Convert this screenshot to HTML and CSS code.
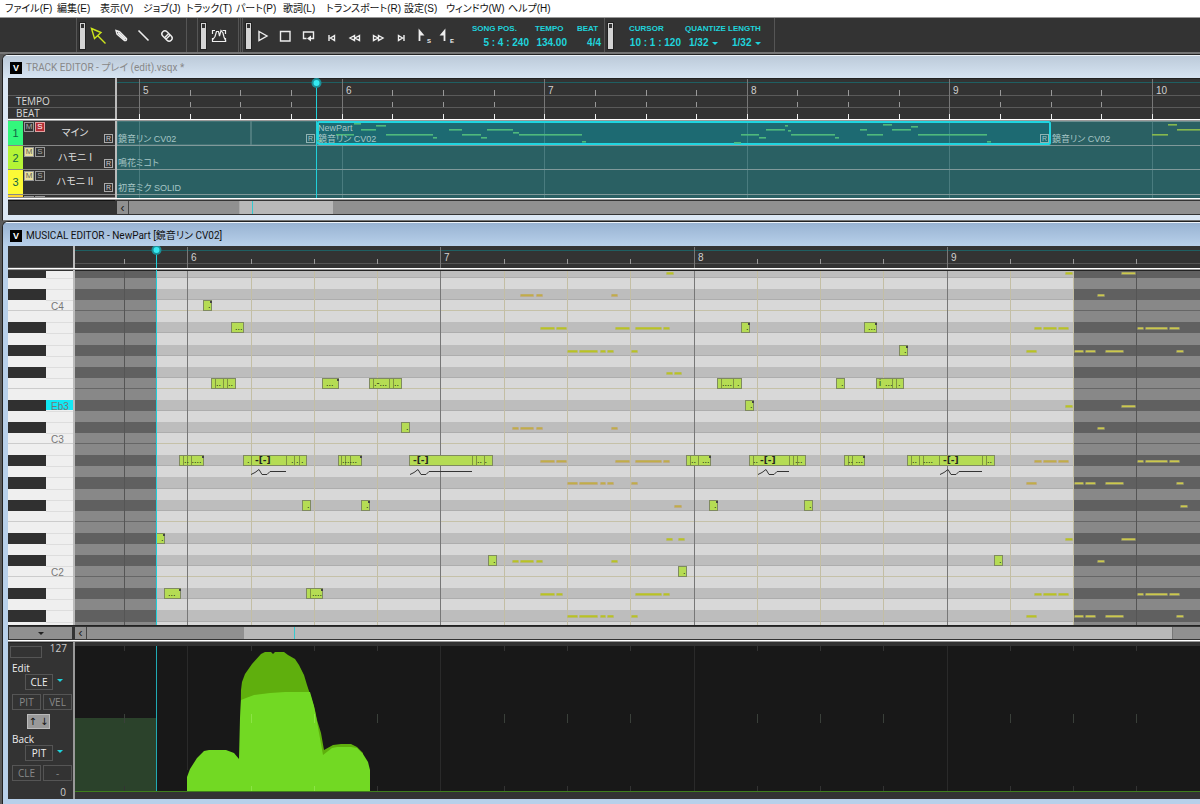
FILE: index.html
```html
<!DOCTYPE html>
<html lang="ja">
<head>
<meta charset="utf-8">
<title>Vocal Editor</title>
<link rel="stylesheet" href="styles.css">
</head>
<body>
<nav class="menubar">
  <button>ファイル(F)</button><button>編集(E)</button><button>表示(V)</button><button>ジョブ(J)</button><button>トラック(T)</button><button>パート(P)</button><button>歌詞(L)</button><button>トランスポート(R)</button><button>設定(S)</button><button>ウィンドウ(W)</button><button>ヘルプ(H)</button>
</nav>

<header class="toolbar">
  <div class="group tools">
    <i class="grip"></i>
    <button class="tool active" aria-label="Select"><svg viewBox="0 0 22 22"><path d="M4.500 3.500L14 7.500L7.500 13.500ZM10.500 10.500L18.500 18.500"/></svg></button>
    <button class="tool" aria-label="Pencil"><svg viewBox="0 0 22 22"><path d="M6 5.500L9.500 6.500L16.500 13.500Q17 16 14.500 15.500L7 9Z"/><path d="M8 7.500L15.500 14.500" stroke-width="2"/></svg></button>
    <button class="tool" aria-label="Line"><svg viewBox="0 0 22 22"><path d="M5.500 5.500L15.500 15.500" stroke-width="1.600"/></svg></button>
    <button class="tool" aria-label="Eraser"><svg viewBox="0 0 22 22"><g transform="rotate(45 11 11)"><rect x="5" y="8" width="12" height="6" rx="3"/><path d="M10.500 8v6M12.500 8v6"/></g></svg></button>
  </div>
  <div class="group control">
    <i class="grip"></i>
    <button class="tool" aria-label="Control curve"><svg viewBox="0 0 22 22"><path d="M7 5.500H4.500V9M4.500 13V16.500H17.500V13M14.500 5.500H17.500V9M4.500 15L7 11.500L8.500 6.500H10.500L11.500 11L13 5.500L15 8L16 12L18 16.500" stroke-width="1.200"/></svg></button>
  </div>
  <div class="group transport">
    <i class="grip"></i>
    <button class="tool" aria-label="Play"><svg viewBox="0 0 22 22"><path d="M7 6.500L15 11L7 15.500Z"/></svg></button>
    <button class="tool" aria-label="Stop"><svg viewBox="0 0 22 22"><path d="M5.500 6.500h9.500v9.500H5.500Z"/></svg></button>
    <button class="tool" aria-label="Loop"><svg viewBox="0 0 22 22"><path d="M8.500 13.500H5.500V7H15.500V13.500H11.500"/><path d="M13 10.500V16.500L9 13.500Z" fill="currentColor" stroke="none"/></svg></button>
    <button class="tool" aria-label="To start"><svg viewBox="0 0 22 22"><path d="M8 10v6M13.500 10.500L9.500 13L13.500 15.500Z"/></svg></button>
    <button class="tool" aria-label="Rewind"><svg viewBox="0 0 22 22"><path d="M10.500 10.500L6 13L10.500 15.500ZM15.500 10.500L11 13L15.500 15.500Z"/></svg></button>
    <button class="tool" aria-label="Forward"><svg viewBox="0 0 22 22"><path d="M6.500 10.500L11 13L6.500 15.500ZM11.500 10.500L16 13L11.500 15.500Z"/></svg></button>
    <button class="tool" aria-label="To end"><svg viewBox="0 0 22 22"><path d="M8.500 10.500L12.500 13L8.500 15.500ZM14 10v6"/></svg></button>
    <button class="tool letter" aria-label="Start marker"><svg viewBox="0 0 22 22"><path d="M6.500 16V6L9.500 9.500H6.500" stroke-width="1.800"/></svg><b>S</b></button>
    <button class="tool letter" aria-label="End marker"><svg viewBox="0 0 22 22"><path d="M8.500 16V6L5.500 9.500H8.500" stroke-width="1.800"/></svg><b>E</b></button>
    <dl class="readouts">
      <div><dt>SONG POS.</dt><dd>5 : 4 : 240</dd></div>
      <div><dt>TEMPO</dt><dd>134.00</dd></div>
      <div class="beat"><dt>BEAT</dt><dd>4/4</dd></div>
    </dl>
  </div>
  <div class="group cursor">
    <i class="grip"></i>
    <dl class="readouts">
      <div><dt>CURSOR</dt><dd>10 : 1 : 120</dd></div>
    </dl>
    <div class="field"><label for="quantize">QUANTIZE</label><span class="drop"><select id="quantize"><option>1/32</option></select></span></div>
    <div class="field"><label for="length">LENGTH</label><span class="drop"><select id="length"><option>1/32</option></select></span></div>
  </div>
</header>

<main>
<section class="window inactive">
  <h2 class="titlebar"><span class="logo">V</span>TRACK EDITOR - プレイ (edit).vsqx *</h2>
  <div class="client track-grid">
    <div class="ruler-labels"><span></span><span>TEMPO</span><span>BEAT</span></div>
    <svg class="canvas ruler-canvas" id="track-ruler"></svg>
    <div class="rule"></div>
    <div class="heads">
      <div class="head green"><b>1</b><span class="ms"><button>M</button><button class="solo">S</button></span><span class="name">マイン</span><i class="r">R</i></div>
      <div class="head lime"><b>2</b><span class="ms"><button class="muted">M</button><button>S</button></span><span class="name">ハモニ I</span><i class="r">R</i></div>
      <div class="head yellow"><b>3</b><span class="ms"><button class="muted">M</button><button>S</button></span><span class="name">ハモニ II</span><i class="r">R</i></div>
      <div class="head amber"><b></b><span class="ms"><button class="muted" aria-label="M"></button><button aria-label="S"></button></span></div>
    </div>
    <svg class="canvas" id="tracks"></svg>
    <div class="rule"></div>
    <div class="foot"></div>
    <div class="scrollbar track-scroll"><button aria-label="Scroll left">‹</button><span class="before"></span><span class="thumb"><i></i></span></div>
  </div>
</section>

<section class="window active-window">
  <h2 class="titlebar"><span class="logo">V</span>MUSICAL EDITOR - NewPart [鏡音リン CV02]</h2>
  <div class="client music-grid">
    <div class="corner"></div>
    <svg class="canvas" id="music-ruler"></svg>
    <div class="rule"></div>
    <svg class="keys" id="keys"></svg>
    <svg class="canvas" id="roll"></svg>
    <div class="edge"></div>
    <button class="param-toggle" aria-label="Toggle parameters"><i class="arrow"></i></button>
    <div class="scrollbar music-scroll"><button aria-label="Scroll left">‹</button><span class="before"></span><span class="thumb"><i></i></span><span class="after"></span></div>
    <div class="rule"></div>
    <div class="params">
      <div class="top"><input aria-label="Value"><span>127</span></div>
      <div class="caption">Edit</div>
      <div class="pick"><button>CLE</button><i class="arrow"></i></div>
      <div class="pair"><button>PIT</button><button>VEL</button></div>
      <button class="swap">↑ ↓</button>
      <div class="caption">Back</div>
      <div class="pick"><button>PIT</button><i class="arrow"></i></div>
      <div class="pair"><button>CLE</button><button>-</button></div>
      <div class="zero">0</div>
    </div>
    <svg class="canvas" id="graph"></svg>
  </div>
</section>
</main>
<script src="app.js"></script>
</body>
</html>
```

FILE: styles.css
```css
* { box-sizing: border-box; }
body {
  margin: 0; min-height: 100vh; display: flex; flex-direction: column;
  background: #5a5a5a; overflow: hidden;
  font-family: "Liberation Sans", "Noto Sans CJK JP", sans-serif;
}
button, input, select { font: inherit; color: inherit; margin: 0; padding: 0; border: 0; background: none; }
i { font-style: normal; }
dl, dd, h2 { margin: 0; }

.menubar {
  display: grid; grid-template-columns: 52px 43px 43px 43px 50px 47px 43px 78px 42px 62px 1fr;
  height: 18px; padding-left: 5px; background: #fff; border-bottom: 1px solid #999;
  font: 10px/17px "Liberation Sans", "Noto Sans CJK JP", sans-serif; font-feature-settings: "palt"; color: #111;
}
.menubar button { text-align: left; white-space: nowrap; }

.toolbar { display: flex; height: 36px; padding-left: 76px; background: #333; border-bottom: 2px solid #777; color: #eee; }
.group { display: flex; align-items: center; border-left: 1px solid #555; border-right: 1px solid #555; padding: 2px 0 0 3px; }
.tools { width: 111px; margin-right: 10px; }
.control { width: 42px; }
.transport { width: 365px; border-left: 3px double #555; margin-left: 1px; }
.cursor { width: 170px; border-left: 0; }
.grip {
  flex: none; width: 5px; height: 26px; outline: 1px solid #222;
  background: linear-gradient(#333, #333) 1px 1px / 3px 4px no-repeat, #d4d4d4;
}
.tool { width: 23px; height: 24px; flex: none; display: flex; align-items: center; justify-content: center; }
.tools .grip { margin-right: 1px; }
.control .grip { margin-right: 1px; }
.tool svg { width: 22px; height: 22px; flex: none; fill: none; stroke: currentColor; stroke-width: 1.4px; }
.tool.active { color: #cde51c; }
.letter { position: relative; }
.letter b { position: absolute; right: 4px; bottom: 3px; font-size: 6px; line-height: 8px; }
.readouts { display: flex; color: #1fd3dc; font-weight: bold; }
.readouts div { display: flex; flex-direction: column; }
dt, .field label { font-size: 8px; line-height: 14px; white-space: nowrap; }
dd, .drop { font-size: 10px; line-height: 14px; white-space: nowrap; }
.readouts dd { text-align: right; }
.transport .readouts { flex: 1; display: grid; grid-template-columns: 57px 32px 28px; column-gap: 6px; padding-left: 14px; }
.beat { padding-left: 4px; }
.cursor .readouts { padding-left: 16px; margin-right: 4px; }
.cursor .readouts div { width: 52px; }
.field { display: flex; flex-direction: column; color: #1fd3dc; font-weight: bold; width: 43px; }
.drop { display: flex; align-items: center; height: 14px; padding-left: 4px; }
.drop select { appearance: none; width: 23px; font-size: 10px; line-height: 14px; outline: 0; }
.drop::after { content: ""; border: 3px solid transparent; border-top-color: #1fd3dc; border-bottom: 0; }

main { flex: 1; display: flex; flex-direction: column; padding-left: 2px; }
.window { display: flex; flex-direction: column; border: 1px solid #222; border-right: 0; border-radius: 6px 0 0 0; padding: 0 0 5px 5px; overflow: hidden; }
.inactive { background: #dbe7f4; border-bottom-color: #777; }
.active-window { flex: 1; background: #b8d0ea; border-bottom-color: #155; margin-bottom: 1px; }
.titlebar {
  display: flex; align-items: center; gap: 4px; margin-left: -5px; padding: 2px 0 0 7px; height: 23px;
  border-top: 1px solid #eef4fa;
  font: 10px/20px Roboto, "Noto Sans CJK JP", sans-serif; font-feature-settings: "palt"; white-space: nowrap;
}
.inactive .titlebar { background: linear-gradient(#bccad9, #d6e4f2); color: #888; }
.active-window .titlebar { height: 24px; background: linear-gradient(#98b3d2, #b8d0ea); color: #111; }
.logo { width: 12px; height: 12px; background: #000; color: #fff; font: bold 9px/12px "Liberation Sans", sans-serif; text-align: center; }
.client { background: #333; }
.canvas, .keys { display: block; width: 100%; }
.canvas { border-left: 2px solid #bbb; }
.rule { grid-column: 1 / -1; background: #fff; border-bottom: 1px solid #999; }

.track-grid { display: grid; grid-template-columns: 107px 1fr; grid-template-rows: 41px 2px 77px 2px 15px; }
.ruler-labels { display: grid; grid-template-rows: 17px 12px 11px; border-top: 1px solid #222; font: 10px/11px "Open Sans", sans-serif; color: #d8d8d8; }
.ruler-labels span { padding-left: 8px; border-bottom: 1px solid #5a5a5a; }
.ruler-canvas, #tracks, #music-ruler, #roll { height: 100%; }
.heads { display: grid; grid-template-rows: 25px 24px 25px 3px; overflow: hidden; }
.head { display: grid; grid-template-columns: 15px 23px 1fr 11px; color: #ddd; border-bottom: 1px solid #888; overflow: hidden; }
.head b { color: #164; font-weight: normal; font-size: 11px; line-height: 24px; text-align: center; }
.green b { background: #33f77c; }
.lime b { background: #b5f436; }
.yellow b { background: #fcfa36; }
.amber b { background: #ffd633; }
.ms { display: flex; gap: 1px; padding: 1px 0 0 1px; }
.ms button { width: 10px; height: 10px; border: 1px solid #999; font-size: 8px; line-height: 8px; color: #aaa; }
.ms .muted { background: #e8dfa0; color: #665; }
.ms .solo { background: #b32d35; color: #fff; border-color: #e5a0a0; }
.name { text-align: center; font-size: 10px; line-height: 24px; font-feature-settings: "palt"; white-space: nowrap; }
.r { align-self: end; width: 9px; height: 9px; margin-bottom: 2px; border: 1px solid #aaa; font-size: 7px; line-height: 8px; text-align: center; color: #ccc; }
.foot { border-top: 1px solid #111; }
.scrollbar { display: flex; border-top: 1px solid #333; border-bottom: 1px solid #333; border-left: 2px solid #333; background: #909090; }
.scrollbar button { width: 12px; border-right: 1px solid #444; font-size: 12px; line-height: 10px; color: #222; }
.thumb { background: #b8b8b8; display: flex; }
.thumb i { width: 1px; background: #35c9d0; }
.track-scroll .before { width: 111px; border-right: 1px solid #aaa; }
.track-scroll .thumb { width: 93px; padding-left: 12px; }

.music-grid { flex: 1; display: grid; grid-template-columns: 65px 1fr; grid-template-rows: 22px 2px 355px 1px 14px 2px 1fr; }
.corner { border-bottom: 1px solid #555; }
.keys { height: 100%; }
.edge { grid-column: 1 / -1; background: #222; }
.param-toggle { background: #909090; border: 1px solid #333; display: grid; place-items: center; }
.arrow { width: 6px; height: 3px; border: 3px solid transparent; border-top-color: #222; border-bottom: 0; }
.music-scroll .before { width: 157px; }
.music-scroll .thumb { flex: 1; padding-left: 50px; }
.music-scroll .after { width: 28px; border-left: 1px solid #777; }

.params { display: flex; flex-direction: column; padding: 2px 1px 0 4px; font: 10px/14px "Open Sans", sans-serif; color: #ccc; border-top: 1px solid #222; }
.params button { border: 1px solid #555; height: 16px; line-height: 14px; }
.top { display: flex; justify-content: space-between; height: 16px; line-height: 7px; padding-right: 5px; }
.top input { width: 32px; height: 12px; margin: 1px 0 0 -2px; border: 1px solid #555; }
.caption { height: 13px; color: #eee; }
.pick { display: flex; gap: 4px; padding-left: 13px; height: 20px; }
.pick button { width: 28px; color: #eee; }
.pick .arrow { border-top-color: #1fd3dc; margin-top: 5px; }
.pair { display: flex; gap: 2px; height: 20px; color: #888; }
.pair button { flex: 1; }
.params .swap { width: 23px; height: 15px; margin: 0 0 3px 15px; background: #999; border-color: #bbb; color: #111; line-height: 12px; font-family: "DejaVu Sans", sans-serif; }
.zero { text-align: right; padding-right: 6px; }
#graph { height: 100%; border-left-color: #999; }

svg text { font-family: "Liberation Sans", "Noto Sans CJK JP", sans-serif; }
.num { font-size: 10px; fill: #d0d0d0; }
.voice { font-size: 9px; fill: #a6c6c6; font-feature-settings: "palt"; }
.key-name { font-size: 10px; fill: #777; }
.lyric { font-size: 9px; fill: #243010; }
svg .mark { font-family: "DejaVu Sans", sans-serif; font-weight: bold; font-size: 9px; fill: #222; }
.rbox { font-size: 7px; fill: #a6c6c6; }
```

FILE: app.js
```js
const NS = 'http://www.w3.org/2000/svg';

function layer(id, dx, dy) {
  const g = document.createElementNS(NS, 'g');
  g.setAttribute('transform', `translate(${-dx} ${-dy})`);
  document.getElementById(id).appendChild(g);
  const add = (tag, attrs, text) => {
    const el = document.createElementNS(NS, tag);
    for (const k in attrs) el.setAttribute(k, attrs[k]);
    if (text !== undefined) el.textContent = text;
    g.appendChild(el);
    return el;
  };
  return {
    add,
    rect: (x, y, width, height, fill, more) => add('rect', { x, y, width, height, fill, ...more }),
    text: (x, y, cls, s) => add('text', { x, y, class: cls }, s)
  };
}

const WIDE = 4000;
const trackBeat = i => Math.round(139 + i * 50.65);
const musicBeat = i => Math.round(124 + i * 63.28);
const fits = x => x + 16 < window.innerWidth;

function marker(l, x, y, bottom) {
  l.rect(x, y, 1, bottom - y, '#20d0da');
  l.add('circle', { cx: x + 0.5, cy: y, r: 5, fill: '#1b8f98' });
  l.add('circle', { cx: x + 0.5, cy: y, r: 3, fill: '#35e8f0' });
}

/* Track ruler */
{
  const l = layer('track-ruler', 117, 78);
  l.rect(117, 78, WIDE, 1, '#222');
  l.rect(117, 82, WIDE, 1, '#1f5f62');
  l.rect(117, 95, WIDE, 1, '#5a5a5a');
  l.rect(117, 107, WIDE, 1, '#5a5a5a');
  for (let i = 0; i < 80; i++) {
    const x = trackBeat(i);
    if (i % 4 === 0) {
      l.rect(x, 79, 1, 40, '#777');
      if (fits(x)) l.text(x + 4, 94, 'num', String(5 + i / 4));
    } else {
      l.rect(x, 90, 1, 6, '#999');
      l.rect(x, 102, 1, 5, '#999');
    }
    l.rect(x, 114, 1, 5, '#eee');
  }
  marker(l, 316, 83, 120);
}

/* Tracks */
{
  const l = layer('tracks', 117, 121);
  l.rect(117, 121, WIDE, 80, '#2a6063');
  for (let i = 0; i < 80; i += 4) l.rect(trackBeat(i), 121, 1, 78, '#4a7c7f');
  l.rect(117, 121, 134, 24, 'none', { stroke: '#5b8587' });
  l.rect(251, 121, 66, 24, 'none', { stroke: '#5b8587' });
  l.rect(318, 122, 732, 22, '#1d6a72', { stroke: '#1fd5e0', 'stroke-width': 2, rx: 1 });
  l.rect(1051, 121, WIDE, 1, '#6b8f90');
  [145, 169, 194].forEach(y => l.rect(117, y, WIDE, 1, '#80999a'));
  [544, 747, 949].forEach(x => l.rect(x, 123, 1, 20, '#37858b'));
  const mini = [
    [317, 322, 140], [336, 354, 134], [354, 361, 123], [361, 376, 129], [376, 386, 125], [386, 433, 134], [433, 437, 137],
    [449, 462, 129], [462, 481, 134], [481, 487, 137], [487, 513, 129], [513, 519, 132], [519, 582, 134], [582, 586, 141],
    [734, 741, 142], [741, 759, 134], [759, 766, 137], [766, 785, 129], [785, 788, 125], [788, 791, 130], [791, 835, 134],
    [835, 839, 137], [860, 867, 129], [867, 883, 134], [883, 892, 124], [892, 911, 129], [911, 918, 126], [918, 987, 134], [987, 991, 141]
  ];
  mini.forEach(([a, b, y]) => l.rect(a, y, b - a, 1.6, '#4fb97c'));
  [[1152, 1168, 134], [1168, 1177, 124], [1177, 1230, 129]].forEach(([a, b, y]) => l.rect(a, y, b - a, 1.6, '#86b84e'));
  const r = x => {
    l.rect(x + 0.5, 134.5, 8, 8, 'none', { stroke: '#8fb3b3' });
    l.text(x + 2, 141, 'rbox', 'R');
  };
  r(306); r(1040);
  l.text(118, 142, 'voice', '鏡音リン CV02');
  l.text(118, 166, 'voice', '鳴花ミコト');
  l.text(118, 191, 'voice', '初音ミク SOLID');
  l.text(318, 131, 'voice', 'NewPart');
  l.text(318, 142, 'voice', '鏡音リン CV02');
  l.text(1052, 142, 'voice', '鏡音リン CV02');
  l.rect(316, 121, 1, 78, '#20d0da');
}

/* Musical ruler */
{
  const l = layer('music-ruler', 75, 246);
  l.rect(75, 250, WIDE, 1, '#1f5f62');
  l.rect(75, 263, WIDE, 1, '#555');
  for (let i = 0; i < 64; i++) {
    const x = musicBeat(i);
    if (i % 4 === 1) {
      l.rect(x, 247, 1, 21, '#777');
      if (fits(x)) l.text(x + 4, 261, 'num', String(6 + (i - 1) / 4));
    } else l.rect(x, 259, 1, 5, '#999');
  }
  marker(l, 156, 250, 268);
}

/* Piano keys and roll. Row 0 is C4, rows go down by semitone. */
const ROW = 11.08;
const rowTop = i => Math.round(300.2 + i * ROW);
const noteOf = i => ((-i % 12) + 12) % 12;
const isBlack = i => [1, 3, 6, 8, 10].includes(noteOf(i));
{
  const k = layer('keys', 8, 270);
  k.rect(8, 270, 65, 360, '#efefef');
  const l = layer('roll', 75, 270);
  l.rect(75, 270, WIDE, 360, '#d8d8d8');
  l.rect(75, 270, 81, 360, '#888');
  l.rect(1074, 270, WIDE, 360, '#888');
  for (let i = -3; i < 30; i++) {
    const y = rowTop(i), h = rowTop(i + 1) - y;
    if (isBlack(i)) {
      k.rect(8, y, 38, h, '#303030');
      k.rect(46, y, 27, 1, '#ddd');
      k.rect(46, y + h, 27, 1, '#ddd');
      l.rect(75, y, WIDE, h, '#bdbdbd');
      l.rect(75, y + h - 1, WIDE, 1, '#adadad');
      l.rect(75, y, 81, h, '#606060');
      l.rect(1074, y, WIDE, h, '#606060');
    } else if (noteOf(i) === 0 || noteOf(i) === 5) {
      k.rect(8, y + h - 1, 65, 1, '#ccc');
      l.rect(156, y + h - 1, 918, 1, '#c5c1a8');
      l.rect(75, y + h - 1, 81, 1, '#666');
      l.rect(1074, y + h - 1, WIDE, 1, '#666');
    }
  }
  k.rect(46, rowTop(9), 27, 10, '#12e8f4');
  [['C4', 0], ['Eb3', 9], ['C3', 12], ['C2', 24]].forEach(([s, i]) => k.text(51, rowTop(i) + 10, 'key-name', s));
  k.rect(8, 270, 65, 1, '#333');
  for (let i = 0; i < 64; i++) {
    const x = musicBeat(i);
    const dim = x < 156 || x > 1075;
    if (i % 4 === 1) l.rect(x, 270, 1, 360, dim ? '#505050' : '#777');
    else l.rect(x, 270, 1, 360, dim ? '#555' : '#c3bea4');
  }
  l.rect(75, 270, WIDE, 1, '#222');

  /* Notes of the other parts: row, then start/end pairs */
  const a = [540, 555, 556, 567, 615, 630, 635, 662, 663, 670, 1034, 1042, 1043, 1057, 1058, 1069, 1137, 1144, 1145, 1168, 1169, 1180];
  const b = [567, 578, 579, 598, 600, 606, 607, 614, 631, 638, 1026, 1037, 1074, 1084, 1085, 1096, 1105, 1124, 1176, 1184];
  const c = [512, 519, 520, 534, 536, 543, 611, 618, 1097, 1105];
  const e = [1065, 1073, 1121, 1136];
  const ghosts = [
    [-3, [666, 674, ...e]], [-1, c.slice(2)], [2, a], [4, b], [6, [666, 673, 674, 682]], [9, e], [11, c],
    [14, a], [16, b], [18, [674, 682, 1180, 1188]], [21, [666, 673, 678, 685, ...e]], [23, c],
    [26, [540, 555, 556, 563, ...a.slice(6)]], [28, b]
  ];
  ghosts.forEach(([row, xs]) => {
    const pale = [-1, 11, 14, 16, 18].includes(row);
    const y = rowTop(row) + 5;
    for (let i = 0; i < xs.length; i += 2) {
      const w = xs[i + 1] - xs[i], dark = xs[i] >= 1074;
      l.rect(xs[i], y, w, 3, dark ? '#8d8d68' : pale ? '#c0ac82' : '#b8bb70', { rx: 1 });
      l.rect(xs[i] + 1, y + 0.5, w - 2, 1.5, dark ? '#ccc84c' : pale ? '#c0ae48' : '#b9c323');
    }
  });

  /* Notes: row, start, end, separators, [[text offset, text]], velocity corner */
  const notes = [
    [0, 203, 211, [], [[5, '.']], 1], [2, 231, 243, [], [[4, '...']]],
    [7, 211, 235, [215, 223, 227], [[5, '..'], [17, '..']]],
    [14, 179, 203, [183, 187, 191], [[5, '.. ....']], 1],
    [14, 243, 306, [251, 286, 294, 299], [[4, '.'], [12, '-[-]'], [48, '. . .']]],
    [14, 338, 361, [341, 345, 350], [[4, '......']], 1],
    [14, 409, 492, [472, 476, 484], [[4, '-[-]'], [68, '.. .']]],
    [11, 401, 409, [], [[5, '.']]], [7, 322, 338, [], [[4, '...']], 1],
    [7, 369, 401, [373, 389, 393], [[5, '.-...'], [25, '..']]],
    [18, 302, 310, [], [[5, '.']]], [18, 361, 369, [], [[5, '.']], 1],
    [21, 156, 164, [], [[5, '.']], 1], [26, 164, 180, [], [[4, '...']], 1],
    [26, 306, 322, [310], [[6, '....']], 1], [23, 488, 496, [], [[5, '.']]], [24, 678, 686, [], [[5, '.']]],
    [2, 741, 749, [], [[5, '.']], 1], [2, 864, 876, [], [[4, '...']], 1],
    [7, 717, 741, [721, 733], [[5, '....'], [20, '.']]], [7, 836, 844, [], [[5, '.']]],
    [7, 876, 903, [892, 896], [[3, 'i'], [9, '...'], [22, '.']]],
    [4, 899, 907, [], [[5, '.']], 1], [9, 745, 753, [], [[5, '.']], 1],
    [14, 686, 710, [690, 698], [[5, '..'], [16, '...']], 1],
    [14, 749, 805, [753, 789, 793, 797], [[4, '..'], [11, '-[-]'], [46, '...']]],
    [14, 844, 864, [848, 852], [[4, '.. ...']], 1],
    [14, 907, 994, [911, 919, 923, 939, 982, 986], [[5, '..'], [16, '....'], [36, '-[-]'], [80, '..']]],
    [18, 709, 717, [], [[5, '.']], 1], [18, 804, 812, [], [[5, '.']]], [23, 994, 1002, [], [[5, '.']]]
  ];
  notes.forEach(([row, x1, x2, seps, texts, corner]) => {
    const y = rowTop(row);
    l.rect(x1 + 0.5, y + 0.5, x2 - x1, 10, '#b5dc54', { stroke: '#7f8a60' });
    seps.forEach(s => l.rect(s, y + 1, 1, 9, '#7f9440'));
    texts.forEach(([dx, s]) => l.text(x1 + dx, y + 8, s.includes('[') ? 'mark' : 'lyric', s));
    if (corner) l.rect(x2 - 1, y + 1, 2, 2, '#444');
  });
  [[251, 286], [410, 472], [758, 789], [940, 982]].forEach(([x, end]) => {
    l.add('path', { d: `M${x} 474.5L${x + 4} 472.500L${x + 8} 469.5L${x + 11} 474.5H${x + 16}L${x + 19} 471.5H${end}`, fill: 'none', stroke: '#333' });
  });
  l.rect(156, 270, 1, 360, '#20d0da');
}

/* Parameter graph */
{
  const l = layer('graph', 75, 642);
  l.rect(75, 642, WIDE, 4, '#333');
  l.rect(75, 646, WIDE, 146, '#181818');
  l.rect(75, 718, 81, 73, '#2b422b');
  l.add('path', { fill: '#5faf0d', d: 'M240 760L241 690L242 682L245 674L252 664L261 654L265 652H271L273 654L275 652H284L288 655L295 659L299 665L304 675L307 685L311 697L315 710L317 720L321 733L324 750L333 745L341 744H351L357 747L363 753V791H240Z' });
  l.add('path', { fill: '#72d923', d: 'M187 791V777L190 769L197 758L204 751L209 750H226L234 753L239 759L240 718L241 700L246 698L254 695L270 693L285 692H310L314 706L317 722L323 755L332 748L337 747H351L357 748L363 754L368 762L370 770V791Z' });
  for (let i = 0; i < 64; i++) {
    const x = musicBeat(i);
    const inside = x > 187 && x < 370;
    if (i % 4 === 1) l.rect(x, 646, 1, x < 190 ? 124 : 145, '#2a2a2a');
    else {
      l.rect(x, 646, 1, 5, '#333');
      l.rect(x, 714, 1, 9, inside ? '#8be445' : '#3a403a');
      l.rect(x, 786, 1, 5, inside ? '#8be445' : '#333');
    }
  }
  l.rect(75, 791, WIDE, 1, '#3f7f1c');
  l.rect(156, 646, 1, 145, '#20aab4');
}
```
